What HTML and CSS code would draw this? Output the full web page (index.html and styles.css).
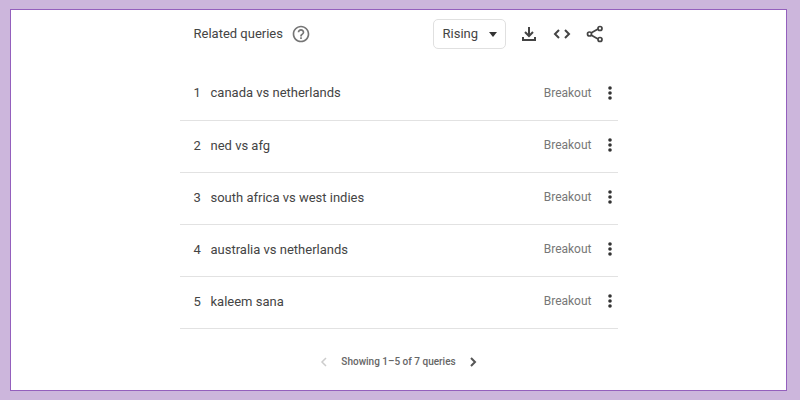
FILE: index.html
```
<!DOCTYPE html>
<html lang="en">
<head>
  <meta charset="UTF-8" />
  <meta name="viewport" content="width=device-width, initial-scale=1.0"/>
  <title>Related queries</title>
  <link rel="stylesheet" href="styles.css">
</head>
<body>

<main class="frame">
  <section class="widget">

    <header class="widget-header">
      <h1 class="title">Related queries</h1>
      <button class="icon-btn help" aria-label="Help">
        <svg width="20" height="20" viewBox="0 0 24 24" fill="#757575"><path d="M11 18h2v-2h-2v2zm1-16C6.480 2 2 6.480 2 12s4.480 10 10 10 10-4.480 10-10S17.520 2 12 2zm0 18c-4.410 0-8-3.590-8-8s3.590-8 8-8 8 3.590 8 8-3.590 8-8 8zm0-14c-2.210 0-4 1.790-4 4h2c0-1.100.9-2 2-2s2 .9 2 2c0 2-3 1.750-3 5h2c0-2.250 3-2.500 3-5 0-2.210-1.790-4-4-4z"/></svg>
      </button>

      <div class="sort">
        <select class="sort-select" aria-label="Sort queries">
          <option>Rising</option>
          <option>Top</option>
        </select>
        <svg class="sort-arrow" width="8" height="5" viewBox="0 0 8 5" fill="#333"><path d="M0 0h8L4 5z"/></svg>
      </div>

      <div class="actions">
        <button class="icon-btn" aria-label="Download">
          <svg width="20" height="20" viewBox="0 0 20 20" fill="none" stroke="#444" stroke-width="2"><path d="M10 3v9M6 8l4 4 4-4M4 13v3h12v-3"/></svg>
        </button>
        <button class="icon-btn" aria-label="Embed">
          <svg width="20" height="20" viewBox="0 0 20 20" fill="none" stroke="#444" stroke-width="2"><path d="M7 6l-4 4 4 4M13 6l4 4-4 4"/></svg>
        </button>
        <button class="icon-btn" aria-label="Share">
          <svg width="20" height="20" viewBox="0 0 20 20" fill="none" stroke="#444" stroke-width="1.7"><path d="M6 9l7-4M6 11l7 4"/><circle cx="4.500" cy="10" r="2"/><circle cx="15" cy="4.500" r="2"/><circle cx="15" cy="15.500" r="2"/></svg>
        </button>
      </div>
    </header>

    <table class="queries" aria-label="Related queries">
      <tr>
        <td class="rank">1</td>
        <td class="query">canada vs netherlands</td>
        <td class="value">Breakout</td>
        <td class="more"><button class="icon-btn" aria-label="More options"><svg width="6" height="16" viewBox="0 0 6 16" fill="#333"><circle cx="3" cy="3" r="1.8"/><circle cx="3" cy="8" r="1.8"/><circle cx="3" cy="13" r="1.8"/></svg></button></td>
      </tr>
      <tr>
        <td class="rank">2</td>
        <td class="query">ned vs afg</td>
        <td class="value">Breakout</td>
        <td class="more"><button class="icon-btn" aria-label="More options"><svg width="6" height="16" viewBox="0 0 6 16" fill="#333"><circle cx="3" cy="3" r="1.8"/><circle cx="3" cy="8" r="1.8"/><circle cx="3" cy="13" r="1.8"/></svg></button></td>
      </tr>
      <tr>
        <td class="rank">3</td>
        <td class="query">south africa vs west indies</td>
        <td class="value">Breakout</td>
        <td class="more"><button class="icon-btn" aria-label="More options"><svg width="6" height="16" viewBox="0 0 6 16" fill="#333"><circle cx="3" cy="3" r="1.8"/><circle cx="3" cy="8" r="1.8"/><circle cx="3" cy="13" r="1.8"/></svg></button></td>
      </tr>
      <tr>
        <td class="rank">4</td>
        <td class="query">australia vs netherlands</td>
        <td class="value">Breakout</td>
        <td class="more"><button class="icon-btn" aria-label="More options"><svg width="6" height="16" viewBox="0 0 6 16" fill="#333"><circle cx="3" cy="3" r="1.8"/><circle cx="3" cy="8" r="1.8"/><circle cx="3" cy="13" r="1.8"/></svg></button></td>
      </tr>
      <tr>
        <td class="rank">5</td>
        <td class="query">kaleem sana</td>
        <td class="value">Breakout</td>
        <td class="more"><button class="icon-btn" aria-label="More options"><svg width="6" height="16" viewBox="0 0 6 16" fill="#333"><circle cx="3" cy="3" r="1.8"/><circle cx="3" cy="8" r="1.8"/><circle cx="3" cy="13" r="1.8"/></svg></button></td>
      </tr>
    </table>

    <nav class="pager" aria-label="Pages">
      <button class="icon-btn" aria-label="Previous" disabled>
        <svg width="8" height="12" viewBox="0 0 8 12" fill="none" stroke="#ccc" stroke-width="1.5"><path d="M6 2L2 6l4 4"/></svg>
      </button>
      <span>Showing 1–5 of 7 queries</span>
      <button class="icon-btn" aria-label="Next">
        <svg width="8" height="12" viewBox="0 0 8 12" fill="none" stroke="#555" stroke-width="2"><path d="M2 2l4 4-4 4"/></svg>
      </button>
    </nav>

  </section>
</main>

</body>
</html>
```
FILE: styles.css
```
*{box-sizing:border-box}

body {
  margin:0;
  min-height:100vh;
  display:flex;
  padding:9px 13px 9px 10px;
  background:#ccb6dc;
  color:#444;
  font-family:Roboto,'Open Sans',sans-serif;
  font-size:13px;
}

.frame {
  flex:1;
  padding:0 16px;
  background:#fff;
  border:1px solid #9460bd;
}

.widget {
  max-width:438px;
  margin:0 auto;
}

.widget-header {
  display:flex;
  align-items:center;
  height:58px;
  padding:0 13px 11px 14px;
}

.title {
  margin:0;
  font-size:13px;
  font-weight:400;
}

.icon-btn {
  display:flex;
  padding:0;
  border:none;
  background:none;
  cursor:pointer;
}

.help {margin-left:8px}

.sort {
  position:relative;
  margin-left:auto;
}

.sort-select {
  appearance:none;
  display:block;
  width:73px;
  height:30px;
  padding:0 9px;
  border:1px solid #e0e0e0;
  border-radius:5px;
  background:#fff;
  color:#444;
  font:inherit;
}

.sort-arrow {
  position:absolute;
  top:13px;
  right:9px;
  pointer-events:none;
}

.actions {
  display:flex;
  gap:13px;
  margin-left:13px;
}

.queries {
  width:100%;
  border-collapse:collapse;
}

.queries td {
  height:52px;
  padding:0 0 2px;
  border-bottom:1px solid #e2e2e2;
}

.queries .rank {
  width:31px;
  padding-left:14px;
}

.queries .value {
  padding-right:15px;
  color:#777;
  font-size:12px;
  text-align:right;
}

.queries .more {width:11px}

.pager {
  display:flex;
  align-items:center;
  justify-content:center;
  gap:13px;
  padding-top:27px;
  color:#666;
  font-size:10px;
  font-weight:500;
}
```
